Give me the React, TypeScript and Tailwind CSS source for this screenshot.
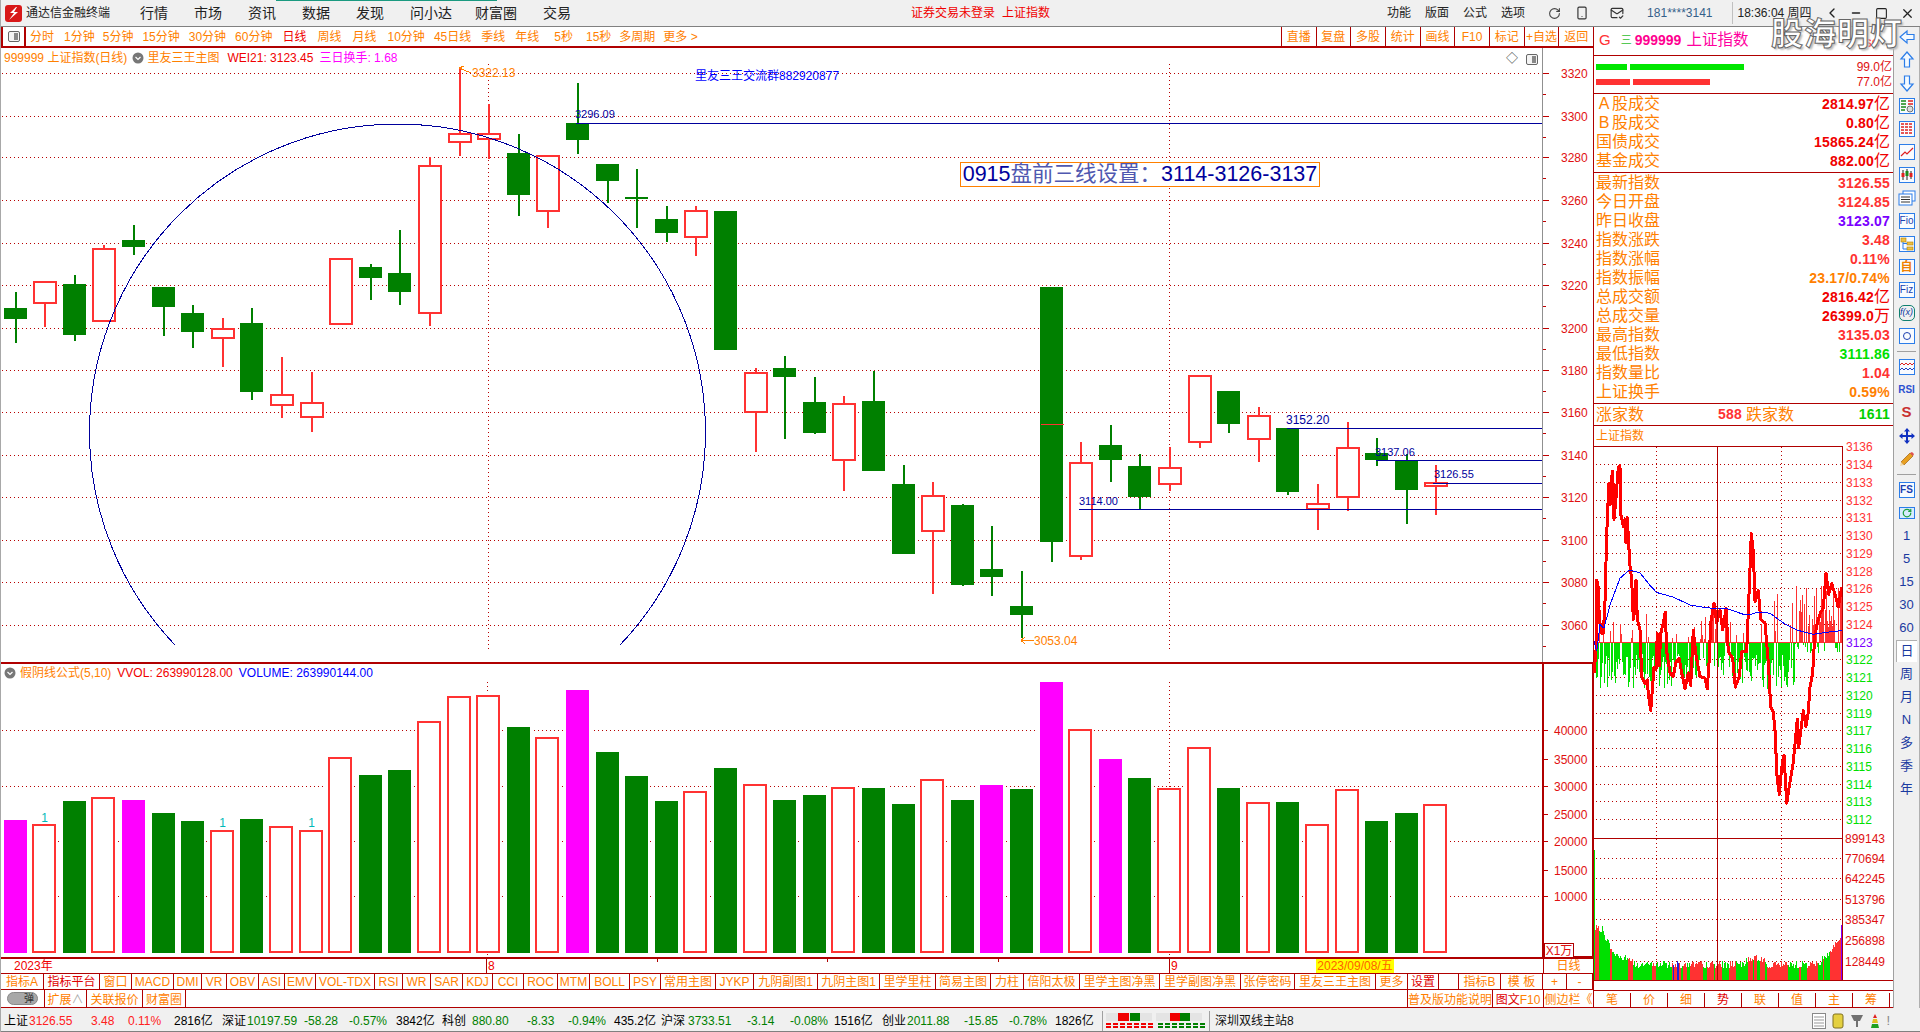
import React from 'react';
import { ChevronLeft, Minus, Square, X, Smartphone, MailCheck, RotateCw } from 'lucide-react';

const RED = '#ff3232';
const GREEN = '#008000';
const GRID = '#b80000';
const NAVY = '#00009c';

// [high, low, bodyTop, bodyBottom, rising]
const candles: [number, number, number, number, boolean][] = [
  [606, 740, 648, 677, false], [580, 698, 580, 636, true], [562, 734, 585, 718, false], [484, 684, 495, 683, true],
  [430, 510, 470, 489, false], [593, 720, 593, 645, false], [640, 752, 661, 711, false], [674, 802, 702, 727, true],
  [648, 888, 687, 867, false], [776, 935, 875, 902, true], [815, 971, 896, 934, true], [521, 691, 521, 691, true],
  [533, 627, 541, 570, false], [444, 640, 557, 606, false], [254, 695, 276, 662, true], [20, 250, 193, 215, true],
  [115, 258, 193, 207, true], [193, 408, 243, 354, false], [250, 438, 250, 395, true], [60, 245, 165, 209, false],
  [272, 373, 272, 316, false], [285, 438, 358, 362, false], [382, 475, 416, 451, false], [382, 512, 394, 463, true],
  [395, 757, 395, 757, false], [806, 1023, 817, 920, true], [774, 990, 805, 828, false], [828, 978, 894, 975, false],
  [879, 1125, 898, 1046, true], [813, 1073, 891, 1073, false], [1058, 1290, 1108, 1290, false], [1103, 1395, 1139, 1231, true],
  [1160, 1375, 1163, 1371, false], [1218, 1400, 1330, 1350, false], [1335, 1510, 1427, 1449, false], [593, 1312, 593, 1259, false],
  [998, 1306, 1052, 1297, true], [954, 1102, 1006, 1044, false], [1030, 1175, 1061, 1141, false], [1010, 1125, 1067, 1109, true],
  [825, 1013, 825, 999, true], [865, 975, 865, 950, false], [907, 1050, 930, 991, true], [962, 1136, 962, 1128, false],
  [1108, 1228, 1159, 1173, true], [946, 1178, 1013, 1142, true], [988, 1060, 1027, 1044, false], [1030, 1212, 1044, 1123, false],
  [1058, 1188, 1105, 1114, true],
];

const barTops: [number, string][] = [
  [480, 'M'], [494, 'R'], [423, 'G'], [413, 'R'], [420, 'M'], [459, 'G'], [483, 'G'], [512, 'R'], [477, 'G'], [500, 'R'],
  [512, 'R'], [293, 'R'], [345, 'G'], [330, 'G'], [187, 'R'], [110, 'R'], [107, 'R'], [201, 'G'], [233, 'R'], [90, 'M'],
  [276, 'G'], [348, 'G'], [423, 'G'], [395, 'R'], [324, 'G'], [374, 'R'], [420, 'G'], [405, 'G'], [383, 'R'], [384, 'G'],
  [432, 'G'], [359, 'R'], [420, 'G'], [375, 'M'], [387, 'G'], [66, 'M'], [209, 'R'], [297, 'M'], [354, 'G'], [386, 'R'],
  [263, 'R'], [384, 'G'], [428, 'R'], [426, 'G'], [494, 'R'], [389, 'R'], [483, 'G'], [459, 'G'], [434, 'R'],
];

const cx = (i: number) => Math.round(14.5 + 29.6 * i) + 0.5;
const cy = (v: number) => Math.round(60 + v / 2.613);

const priceGrid = [73, 116, 157, 200, 243, 285, 328, 370, 412, 455, 497, 540, 582, 625];
const priceLabels = [3320, 3300, 3280, 3260, 3240, 3220, 3200, 3180, 3160, 3140, 3120, 3100, 3080, 3060];
const volLabels: [string, number][] = [
  ['40000', 730], ['35000', 759], ['30000', 786], ['25000', 814], ['20000', 841], ['15000', 870], ['10000', 896],
];

function PriceChart() {
  return (
    <svg width={1592} height={614} viewBox="1 48 1592 614" shapeRendering="crispEdges" className="block">
      {priceGrid.map((y) => (
        <line key={y} x1={2} x2={1542} y1={y + 0.5} y2={y + 0.5} stroke={GRID} strokeDasharray="1 3" />
      ))}
      {[488, 1169].map((x) => (
        <line key={x} x1={x + 0.5} x2={x + 0.5} y1={64} y2={650} stroke={GRID} strokeDasharray="1 3" />
      ))}
      <line x1={1542.5} x2={1542.5} y1={48} y2={662} stroke="#909090" />
      {priceGrid.map((y, i) => (
        <g key={y}>
          <line x1={1543} x2={1549} y1={y + 0.5} y2={y + 0.5} stroke="#c00000" />
          <line x1={1543} x2={1546} y1={y + 21.5} y2={y + 21.5} stroke="#c00000" />
          <text x={1561} y={y + 5} fontSize={12} fill="#e01010">{priceLabels[i]}</text>
        </g>
      ))}
      {candles.map(([hi, lo, top, bot, up], i) => {
        const x = cx(i);
        const color = up ? RED : GREEN;
        return (
          <g key={i}>
            <line x1={x} x2={x} y1={cy(hi)} y2={cy(lo)} stroke={color} strokeWidth={2} />
            {up ? (
              <rect x={x - 11} y={cy(top)} width={22} height={cy(bot) - cy(top)} fill="#fff" stroke={RED} strokeWidth={2} />
            ) : (
              <rect x={x - 11.5} y={cy(top)} width={23} height={Math.max(cy(bot) - cy(top), 2)} fill={GREEN} />
            )}
          </g>
        );
      })}
      <line x1={cx(35) - 11} x2={cx(35) + 12} y1={424.5} y2={424.5} stroke={RED} />
      <path d="M175 645 A308 308 0 1 1 620 645" fill="none" stroke={NAVY} />
      <line x1={576} x2={1542} y1={123.5} y2={123.5} stroke={NAVY} />
      <line x1={1287} x2={1542} y1={428.5} y2={428.5} stroke={NAVY} />
      <line x1={1376} x2={1542} y1={460.5} y2={460.5} stroke={NAVY} />
      <line x1={1433} x2={1542} y1={483.5} y2={483.5} stroke={NAVY} />
      <line x1={1079} x2={1542} y1={509.5} y2={509.5} stroke={NAVY} />
      <text x={575} y={118} fontSize={11} fill={NAVY}>3296.09</text>
      <text x={1286} y={424} fontSize={12} fill={NAVY}>3152.20</text>
      <text x={1375} y={456} fontSize={11} fill={NAVY}>3137.06</text>
      <text x={1434} y={478} fontSize={11} fill={NAVY}>3126.55</text>
      <text x={1079} y={505} fontSize={11} fill={NAVY}>3114.00</text>
      <path d="M459 68 L464 66 M459 68 L471 73" stroke="#ff8000" fill="none" />
      <text x={472} y={77} fontSize={12} fill="#ff8000">3322.13</text>
      <path d="M1021 640.5 H1034 M1021 640.5 L1025 637 M1021 640.5 L1025 644" stroke="#ff8000" fill="none" />
      <text x={1034} y={645} fontSize={12} fill="#ff8000">3053.04</text>
    </svg>
  );
}

function VolumeChart() {
  return (
    <svg width={1592} height={293} viewBox="1 664 1592 293" shapeRendering="crispEdges" className="block">
      {[730, 786, 841, 896].map((y) => (
        <line key={y} x1={2} x2={1542} y1={y + 0.5} y2={y + 0.5} stroke={GRID} strokeDasharray="1 3" />
      ))}
      {[487, 1169].map((x) => (
        <line key={x} x1={x + 0.5} x2={x + 0.5} y1={682} y2={957} stroke={GRID} strokeDasharray="1 3" />
      ))}
      {barTops.map(([top, kind], i) => {
        const x = Math.round(14.5 + 29.6 * i);
        const y = Math.round(660 + top / 3);
        const fill = kind === 'M' ? '#ff00ff' : GREEN;
        return (
          <g key={i}>
            <rect x={x - 14} y={y - 2} width={28} height={955 - y} fill="#fff" />
            {kind === 'R' ? (
              <rect x={x - 11} y={y} width={22} height={952 - y} fill="#fff" stroke={RED} strokeWidth={2} />
            ) : (
              <rect x={x - 11.5} y={y} width={23} height={953 - y} fill={fill} />
            )}
          </g>
        );
      })}
      {[1, 7, 10].map((i, n) => (
        <text key={i} x={cx(i)} y={[822, 827, 827][n]} fontSize={12} textAnchor="middle" fill="#00b8b8">1</text>
      ))}
      <rect x={1543} y={663} width={50} height={294} fill="#fff" stroke="#b00000" strokeWidth={2} />
      {volLabels.map(([t, y]) => (
        <g key={t}>
          <line x1={1544} x2={1548} y1={y + 0.5} y2={y + 0.5} stroke="#c00000" />
          <text x={1554} y={y + 5} fontSize={12} fill="#e01010">{t}</text>
        </g>
      ))}
    </svg>
  );
}

const linePts = '12,680 18,620 20,420 25,440 28,530 35,570 40,570 45,480 48,370 50,290 53,230 56,150 60,210 65,130 68,115 72,250 78,190 85,105 90,100 92,235 100,270 105,250 108,315 112,245 116,320 120,380 125,420 130,530 135,500 138,420 142,530 150,560 155,690 165,710 172,700 175,740 182,785 186,740 192,665 198,670 202,570 208,660 212,570 220,540 226,510 230,620 240,680 250,690 258,650 268,640 275,680 285,725 295,680 302,715 310,560 318,630 330,690 345,695 352,725 358,640 362,540 372,485 380,540 390,505 398,560 408,500 415,620 428,640 436,720 448,690 455,620 470,620 478,440 484,290 490,340 495,480 505,450 512,530 525,540 535,650 542,775 550,790 556,850 560,960 568,1020 575,945 582,910 590,1045 600,985 610,930 622,810 626,890 640,785 648,830 655,790 660,720 668,680 674,580 682,540 692,510 700,500 708,400 716,460 725,430 735,460 745,495 755,440';
const avgPts = '12,590 20,620 30,545 42,555 60,490 90,415 118,392 150,400 180,435 200,455 250,468 300,490 350,498 410,500 460,516 485,516 500,510 540,513 580,540 620,560 670,572 720,565 755,562';

const toPage = (pts: string) =>
  pts.split(' ').map((p) => {
    const [x, y] = p.split(',').map(Number);
    return `${(1590 + x / 3).toFixed(1)},${(430 + y / 2.8).toFixed(1)}`;
  }).join(' ');

function seeded(seed: number) {
  let s = seed;
  return () => {
    s = (s * 1103515245 + 12345) & 0x7fffffff;
    return s / 0x7fffffff;
  };
}

function histogram() {
  const rnd = seeded(42);
  const out: { x: number; h: number; up: boolean }[] = [];
  for (let i = 0; i < 248; i++) {
    const z = i * 3;
    const pRed = z < 350 ? 0.2 : z < 480 ? 0.45 : z < 600 ? 0.12 : 0.72;
    const up = rnd() < pRed;
    const peak = up ? (z < 100 ? 30 : z < 350 ? 26 : z < 500 ? 36 : 46) : z < 350 ? 34 : z < 500 ? 30 : z < 600 ? 36 : 10;
    const floor = up ? (z >= 600 ? 12 : 3) : z >= 600 ? 2 : 12;
    out.push({ x: 1595 + i, h: Math.round(floor + peak * rnd()), up });
  }
  return out;
}

function miniVolumes() {
  const rnd = seeded(7);
  const out: { x: number; h: number; color: string }[] = [];
  let red = true;
  for (let i = 0; i < 248; i++) {
    if (rnd() < 0.3) red = rnd() < 0.45;
    const base = i < 8 ? 48 : i < 20 ? 44 - (i - 8) * 2 : i < 40 ? 22 - (i - 20) * 0.4 : i > 225 ? 16 + (i - 225) : i > 150 && i < 170 ? 18 : 12;
    const color = i > 75 && i < 84 && rnd() < 0.3 ? '#2020e0' : red ? RED : '#00e000';
    out.push({ x: 1595 + i, h: Math.round(base + rnd() * 7), color });
  }
  return out;
}

const miniLabels = [3136, 3134, 3133, 3132, 3131, 3130, 3129, 3128, 3126, 3125, 3124, 3123, 3122, 3121, 3120, 3119, 3117, 3116, 3115, 3114, 3113, 3112];
const miniVolLabels: [string, number][] = [
  ['899143', 838], ['770694', 858], ['642245', 878], ['513796', 899], ['385347', 919], ['256898', 940], ['128449', 961],
];

function MiniChart() {
  const axisY = 642;
  return (
    <svg width={299} height={535} viewBox="1594 446 299 535" shapeRendering="crispEdges" className="block overflow-visible">
      {miniLabels.map((_, i) => (
        <line key={i} x1={1596} x2={1842} y1={Math.round(446.4 + i * 17.75) + 0.5} y2={Math.round(446.4 + i * 17.75) + 0.5} stroke={GRID} strokeDasharray="1 3" />
      ))}
      {miniVolLabels.map(([t, y]) => (
        <line key={t} x1={1596} x2={1842} y1={y + 0.5} y2={y + 0.5} stroke={GRID} strokeDasharray="1 3" />
      ))}
      {[1656, 1781].map((x) => (
        <line key={x} x1={x + 0.5} x2={x + 0.5} y1={447} y2={980} stroke={GRID} strokeDasharray="1 3" />
      ))}
      {histogram().map((b) => (
        <line key={b.x} x1={b.x + 0.5} x2={b.x + 0.5} y1={b.up ? axisY - b.h : axisY} y2={b.up ? axisY : axisY + b.h} stroke={b.up ? RED : '#00e000'} />
      ))}
      <line x1={1594} x2={1842} y1={642.5} y2={642.5} stroke={RED} />
      <polyline points={toPage(linePts)} fill="none" stroke="#ff0000" strokeWidth={3} strokeLinejoin="round" />
      <polyline points={toPage(avgPts)} fill="none" stroke="#0000ff" />
      {miniVolumes().map((b) => (
        <line key={b.x} x1={b.x + 0.5} x2={b.x + 0.5} y1={980 - b.h} y2={980} stroke={b.color} />
      ))}
      <rect x={1594} y={850} width={1} height={130} fill="#00e000" />
      <rect x={1841} y={925} width={2} height={55} fill="#8000ff" />
      <line x1={1594} x2={1842} y1={446.5} y2={446.5} stroke="#b00000" />
      <line x1={1842.5} x2={1842.5} y1={446} y2={980} stroke="#b00000" />
      <line x1={1717.5} x2={1717.5} y1={446} y2={980} stroke="#b00000" />
      <line x1={1594} x2={1842} y1={838.5} y2={838.5} stroke="#b00000" />
      <line x1={1594} x2={1893} y1={980.5} y2={980.5} stroke="#b00000" />
      {miniLabels.map((v, i) => (
        <text key={v} x={1846} y={Math.round(446.4 + i * 17.75) + 5} fontSize={12} fill={v === 3123 ? '#7a00ff' : v > 3123 ? RED : '#00e000'}>{v}</text>
      ))}
      {miniVolLabels.map(([t, y]) => (
        <text key={t} x={1845} y={y + 5} fontSize={12} fill="#e01010">{t}</text>
      ))}
    </svg>
  );
}

const periods: [string, string, number][] = [
  ['分时', '#ff8000', 10], ['1分钟', '#ff8000', 8], ['5分钟', '#ff8000', 9], ['15分钟', '#ff8000', 9], ['30分钟', '#ff8000', 9],
  ['60分钟', '#ff8000', 10], ['日线', '#f00000', 11], ['周线', '#ff8000', 11], ['月线', '#ff8000', 11], ['10分钟', '#ff8000', 9],
  ['45日线', '#ff8000', 10], ['季线', '#ff8000', 10], ['年线', '#ff8000', 15], ['5秒', '#ff8000', 13], ['15秒', '#ff8000', 8],
  ['多周期', '#ff8000', 8], ['更多 >', '#ff8000', 0],
];
const toolButtons = ['直播', '复盘', '多股', '统计', '画线', 'F10', '标记', '+自选', '返回'];

// [label, right edge]
const tabs: [string, number][] = [
  ['指标A', 44], ['指标平台', 100], ['窗口', 132], ['MACD', 174], ['DMI', 202], ['VR', 227], ['OBV', 259], ['ASI', 285],
  ['EMV', 316], ['VOL-TDX', 375], ['RSI', 403], ['WR', 431], ['SAR', 463], ['KDJ', 493], ['CCI', 524], ['ROC', 558],
  ['MTM', 590], ['BOLL', 630], ['PSY', 661], ['常用主图', 716], ['JYKP', 754], ['九阴副图1', 818], ['九阴主图1', 880],
  ['里学里柱', 936], ['简易主图', 991], ['力柱', 1024], ['倍阳太极', 1080], ['里学主图净黑', 1160], ['里学副图净黑', 1241],
  ['张停密码', 1295], ['里友三王主图', 1376], ['更多', 1408], ['设置', 1439], ['', 1459], ['指标B', 1501], ['模 板', 1543],
  ['+', 1567], ['-', 1593],
];

// [text, colour, left edge]
const quotes: [string, string, number][] = [
  ['上证', '#000', 4], ['3126.55', '#ff2020', 29], ['3.48', '#ff2020', 91], ['0.11%', '#ff2020', 128], ['2816亿', '#000', 174],
  ['深证', '#000', 222], ['10197.59', GREEN, 247], ['-58.28', GREEN, 304], ['-0.57%', GREEN, 349], ['3842亿', '#000', 396],
  ['科创', '#000', 442], ['880.80', GREEN, 472], ['-8.33', GREEN, 527], ['-0.94%', GREEN, 568], ['435.2亿', '#000', 614],
  ['沪深', '#000', 661], ['3733.51', GREEN, 688], ['-3.14', GREEN, 747], ['-0.08%', GREEN, 790], ['1516亿', '#000', 834],
  ['创业', '#000', 882], ['2011.88', GREEN, 907], ['-15.85', GREEN, 964], ['-0.78%', GREEN, 1009], ['1826亿', '#000', 1055],
];

const group1 = [
  ['A股成交', '2814.97', '亿', '#f00000'], ['B股成交', '0.80', '亿', '#f00000'], ['国债成交', '15865.24', '亿', '#f00000'], ['基金成交', '882.00', '亿', '#f00000'],
];
const group2 = [
  ['最新指数', '3126.55', '', RED], ['今日开盘', '3124.85', '', RED], ['昨日收盘', '3123.07', '', '#7a00ff'], ['指数涨跌', '3.48', '', RED],
  ['指数涨幅', '0.11%', '', RED], ['指数振幅', '23.17/0.74%', '', '#ff8000'], ['总成交额', '2816.42', '亿', '#f00000'], ['总成交量', '26399.0', '万', '#f00000'],
  ['最高指数', '3135.03', '', RED], ['最低指数', '3111.86', '', '#00e000'], ['指数量比', '1.04', '', RED], ['上证换手', '0.59%', '', '#ff8000'],
];

function InfoRow({ row }: { row: string[] }) {
  const [label, value, unit, color] = row;
  const spaced = label[0] === 'A' || label[0] === 'B';
  return (
    <div className="flex h-[19px] items-center justify-between pl-[2px] pr-[3px] pt-px text-[16px] text-[#ff8000]">
      <span className="whitespace-nowrap">
        {spaced ? <span className="inline-block w-4 text-center">{label[0]}</span> : null}
        {spaced ? label.slice(1) : label}
      </span>
      <span className="whitespace-nowrap" style={{ color }}>
        <b className="text-[14px] tracking-[0.2px]">{value}</b>
        {unit}
      </span>
    </div>
  );
}

function ChevronDot() {
  return (
    <svg width={12} height={12} viewBox="0 0 12 12" className="shrink-0">
      <circle cx={6} cy={6} r={5.5} fill="#777" />
      <path d="M3.5 5 L6 7.5 L8.5 5" fill="none" stroke="#fff" strokeWidth={1.2} />
    </svg>
  );
}

function PanelToggle() {
  return (
    <svg width={12} height={11} viewBox="0 0 12 11" className="shrink-0">
      <rect x={0.5} y={0.5} width={11} height={10} rx={1.5} fill="#f4f4f4" stroke="#666" />
      <rect x={6} y={2} width={4} height={7} fill="#888" />
    </svg>
  );
}

function Arrow({ d }: { d: string }) {
  return (
    <svg width={20} height={20} viewBox="0 0 20 20">
      <path d={d} fill="#f4faff" stroke="#2b7de9" strokeWidth={1.2} />
    </svg>
  );
}

function IconBox({ children }: { children?: React.ReactNode }) {
  return (
    <div className="flex h-[16px] w-[16px] items-center justify-center overflow-hidden border border-[#2b7de9] bg-[#f8fbff] text-[10px] leading-none text-[#1b3fb0]">
      {children}
    </div>
  );
}

const stripText = 'text-[13px] text-[#1b3aa0]';

function SideStrip() {
  const Cell = ({ children }: { children?: React.ReactNode }) => (
    <div className="flex h-[23px] items-center justify-center">{children}</div>
  );
  const Sep = () => (
    <div className="flex h-[8px] items-center px-[3px]"><div className="h-px w-full bg-[#a0a0a0]" /></div>
  );
  return (
    <div className="flex w-[25px] flex-col">
      <Cell><Arrow d="M3 10 L10 4 V7.5 H17 V12.5 H10 V16 Z" /></Cell>
      <Cell><Arrow d="M10 2 L16 9 H12.5 V17 H7.5 V9 H4 Z" /></Cell>
      <Cell><Arrow d="M10 18 L16 11 H12.5 V3 H7.5 V11 H4 Z" /></Cell>
      <Cell>
        <IconBox>
          <svg width={14} height={14} viewBox="0 0 14 14"><path d="M1 2h5M1 5h5M1 8h5M1 11h4" stroke="#1a8a1a" strokeWidth={1.4} /><path d="M8 2h5M8 5h5" stroke="#e02020" strokeWidth={1.4} /><circle cx={10} cy={10} r={3} fill="#ddd" stroke="#555" strokeWidth={0.8} /></svg>
        </IconBox>
      </Cell>
      <Cell>
        <IconBox>
          <svg width={14} height={14} viewBox="0 0 14 14"><path d="M1 2h12M1 5h12M1 8h12M1 11h12" stroke="#e02020" strokeWidth={1.5} strokeDasharray="3 1" /></svg>
        </IconBox>
      </Cell>
      <Cell>
        <IconBox>
          <svg width={14} height={14} viewBox="0 0 14 14"><path d="M1 11 L5 7 L7 9 L13 3" fill="none" stroke="#e02020" strokeWidth={1.2} /></svg>
        </IconBox>
      </Cell>
      <Cell>
        <IconBox>
          <svg width={14} height={14} viewBox="0 0 14 14"><path d="M3 2v10M7 1v11M11 3v8" stroke="#222" /><rect x={1.5} y={5} width={3} height={4} fill="#e02020" /><rect x={5.5} y={3} width={3} height={5} fill="#1a8a1a" /><rect x={9.5} y={5} width={3} height={4} fill="#e02020" /></svg>
        </IconBox>
      </Cell>
      <Cell>
        <svg width={18} height={16} viewBox="0 0 18 16"><rect x={5} y={1} width={12} height={10} fill="#fff" stroke="#2b7de9" /><rect x={1} y={4} width={13} height={11} fill="#fff" stroke="#2b7de9" /><path d="M3 7h9M3 9.5h9M3 12h9" stroke="#333" /></svg>
      </Cell>
      <Cell><IconBox>Fio</IconBox></Cell>
      <Cell>
        <IconBox>
          <svg width={14} height={14} viewBox="0 0 14 14"><rect x={1} y={1} width={5} height={4} fill="#f0c040" stroke="#b08000" strokeWidth={0.6} /><rect x={7} y={5} width={6} height={3} fill="#f0c040" stroke="#b08000" strokeWidth={0.6} /><rect x={7} y={10} width={6} height={3} fill="#f0c040" stroke="#b08000" strokeWidth={0.6} /><path d="M3 5v7h4M3 6.5h4" fill="none" stroke="#2b7de9" /></svg>
        </IconBox>
      </Cell>
      <Cell><IconBox><span className="text-[12px] font-bold text-[#f08000]">自</span></IconBox></Cell>
      <Cell><IconBox>Fiz</IconBox></Cell>
      <Cell>
        <div className="flex h-[16px] w-[16px] items-center justify-center rounded-[5px] border border-[#108070] text-[9px] italic text-[#0a3aa0]">f(x)</div>
      </Cell>
      <Cell>
        <IconBox><span className="h-[8px] w-[8px] rounded-full border border-[#1b3fb0]" /></IconBox>
      </Cell>
      <Sep />
      <Cell>
        <IconBox>
          <svg width={14} height={10} viewBox="0 0 14 10"><path d="M0 3 L2 1 L4 3 L6 1 L8 3 L10 1 L12 3 L14 1" fill="none" stroke="#e02020" /><path d="M0 8 L2 6 L4 8 L6 6 L8 8 L10 6 L12 8 L14 6" fill="none" stroke="#2040c0" /></svg>
        </IconBox>
      </Cell>
      <Cell><span className="text-[10px] font-bold text-[#2b50d0]">RSI</span></Cell>
      <Cell><span className="text-[15px] font-bold text-[#c83030]">S</span></Cell>
      <Cell>
        <svg width={16} height={16} viewBox="0 0 16 16" fill="#1030c0"><path d="M8 0 L11 3.5 H9 V7 H12.5 V5 L16 8 L12.5 11 V9 H9 V12.5 H11 L8 16 L5 12.5 H7 V9 H3.5 V11 L0 8 L3.5 5 V7 H7 V3.5 H5 Z" /></svg>
      </Cell>
      <Cell>
        <svg width={16} height={16} viewBox="0 0 16 16"><path d="M2 11 L11 2 L14 5 L5 14 Z" fill="#e8a020" stroke="#a06010" strokeWidth={0.7} /><path d="M2 11 L1 15 L5 14 Z" fill="#f4d8a0" /><path d="M11 2 L14 5 L15 3 L13 1 Z" fill="#e05050" /></svg>
      </Cell>
      <Sep />
      <Cell><IconBox><b>FS</b></IconBox></Cell>
      <Cell>
        <div className="flex h-[12px] w-[16px] items-center justify-center border border-[#2b7de9] bg-[#d8ecff]"><RotateCw size={10} color="#20a040" strokeWidth={3} /></div>
      </Cell>
      {['1', '5', '15', '30', '60'].map((t) => (
        <Cell key={t}><span className={stripText}>{t}</span></Cell>
      ))}
      <Cell><span className={`${stripText} flex h-[22px] w-[21px] items-center justify-center border-l border-t border-[#b0b0b0] bg-white`}>日</span></Cell>
      {['周', '月', 'N', '多', '季', '年'].map((t) => (
        <Cell key={t}><span className={stripText}>{t}</span></Cell>
      ))}
    </div>
  );
}

function TitleBar() {
  const menus = ['行情', '市场', '资讯', '数据', '发现', '问小达', '财富圈', '交易'];
  return (
    <div className="relative flex h-[27px] shrink-0 items-center border-b border-[#808080] bg-[#f0f0f0] text-[12px] text-[#222]">
      <div className="absolute left-[275px] top-0 h-px w-[221px] bg-[#1a9a80]" />
      <svg width={17} height={17} viewBox="0 0 17 17" className="ml-[4px]">
        <rect width={17} height={17} rx={3} fill="#d81818" />
        <path d="M11 2 L5 8 H9 L4 15 L13 7 H9 L12 2 Z" fill="#fff" />
      </svg>
      <span className="ml-[4px]">通达信金融终端</span>
      <div className="ml-[30px] flex gap-[26px] text-[14px]">
        {menus.map((m) => <span key={m} className={m === '问小达' ? '-mr-[3px]' : ''}>{m}</span>)}
      </div>
      <span className="ml-[340px] text-[#f00000]">证券交易未登录</span>
      <span className="ml-[7px] text-[#f00000]">上证指数</span>
      <div className="ml-[337px] flex gap-[14px]">
        {['功能', '版面', '公式', '选项'].map((m) => <span key={m}>{m}</span>)}
      </div>
      <RotateCw size={13} className="ml-[23px]" color="#444" />
      <Smartphone size={14} className="ml-[14px]" color="#333" />
      <MailCheck size={14} className="ml-[21px]" color="#333" />
      <span className="ml-[23px] text-[#35608a]">181****3141</span>
      <div className="ml-[19px] flex h-[22px] items-center whitespace-nowrap border-l border-[#c0c0c0] pl-[5px]">18:36:04 周四</div>
      <ChevronLeft size={16} className="absolute left-[1823px]" color="#222" />
      <Minus size={12} className="absolute left-[1849px]" color="#222" strokeWidth={3} />
      <Square size={13} className="absolute left-[1874px]" color="#222" />
      <X size={15} className="absolute left-[1899px]" color="#222" />
    </div>
  );
}

function Toolbar() {
  return (
    <div className="flex h-[21px] shrink-0 items-center border-b-2 border-[#b00000] text-[12px]">
      <div className="flex h-full w-[25px] items-center justify-center border-x-2 border-[#b00000]"><PanelToggle /></div>
      <div className="ml-[4px] flex items-center whitespace-nowrap">
        {periods.map(([t, c, gap]) => (
          <span key={t} style={{ color: c, marginRight: gap }}>{t}</span>
        ))}
      </div>
      <div className="ml-auto flex h-full">
        {toolButtons.map((t) => (
          <div key={t} className="flex w-[34.7px] items-center justify-center whitespace-nowrap border-l border-[#b00000] text-[#ff8000]">{t}</div>
        ))}
      </div>
    </div>
  );
}

function PricePane() {
  return (
    <div className="relative h-[614px] shrink-0">
      <PriceChart />
      <div className="absolute left-[3px] top-[1px] flex h-[17px] items-center whitespace-nowrap text-[12px]">
        <span className="text-[#ff8000]">999999 上证指数(日线)</span>
        <span className="ml-[5px]"><ChevronDot /></span>
        <span className="ml-[3px] text-[#ff8000]">里友三王主图</span>
        <span className="ml-[8px] text-[#f00000]">WEI21: 3123.45</span>
        <span className="ml-[6px] text-[#ff00ff]">三日换手: 1.68</span>
      </div>
      <div className="absolute left-[1505px] top-[2px] flex items-center gap-[8px] text-[12px] text-[#444]">
        <span>◇</span>
        <PanelToggle />
      </div>
      <div className="absolute left-[694px] top-[19px] whitespace-nowrap text-[12px] text-[#0000ff]">里友三王交流群882920877</div>
      <div className="absolute left-[959px] top-[114px] flex h-[25px] w-[360px] items-center justify-center whitespace-nowrap border border-[#ff8000] bg-white text-[21.5px] text-[#00009c]">
        0915<span className="text-[#5058b0]">盘前三线设置：</span>3114-3126-3137
      </div>
    </div>
  );
}

function VolumePane() {
  return (
    <div className="relative h-[295px] shrink-0 border-t-2 border-[#b00000]">
      <VolumeChart />
      <div className="absolute left-[3px] top-0 flex h-[17px] items-center gap-[6px] whitespace-nowrap text-[12px]">
        <ChevronDot />
        <span className="-ml-[2px] text-[#ff8000]">假阴线公式(5,10)</span>
        <span className="text-[#f00000]">VVOL: 263990128.00</span>
        <span className="text-[#0000ff]">VOLUME: 263990144.00</span>
      </div>
      <div className="absolute bottom-[-1px] left-[1543px] flex h-[15px] w-[30px] items-center justify-center border border-[#b00000] bg-white text-[12px] text-[#e01010]">X1万</div>
    </div>
  );
}

function DateRow() {
  return (
    <div className="relative flex h-[16px] shrink-0 items-center border-t-2 border-[#b00000] text-[12px] text-[#f00000]">
      <span className="ml-[13px] w-[472px]">2023年</span>
      <span className="h-full w-[683px] border-l border-[#b00000] pl-[1px] leading-[14px]">8</span>
      <span className="h-full w-[147px] border-l border-[#b00000] pl-[1px] leading-[14px]">9</span>
      <span className="flex h-full w-[78px] items-center justify-center whitespace-nowrap bg-[#ffff00] text-[#ff6000]">2023/09/08/五</span>
      <span className="ml-[149px] flex h-full w-[50px] items-center justify-center border-l border-[#b00000] text-[#ff8000]">日线</span>
      <div className="absolute left-[656px] top-0 h-[3px] w-px bg-[#b00000]" />
      <div className="absolute left-[826px] top-0 h-[3px] w-px bg-[#b00000]" />
      <div className="absolute left-[997px] top-0 h-[3px] w-px bg-[#b00000]" />
    </div>
  );
}

function TabRow() {
  return (
    <div className="flex h-[17px] shrink-0 border-y border-[#b00000] text-[12px] text-[#ff8000]">
      {tabs.map(([label, right], i) => {
        const left = i === 0 ? 1 : tabs[i - 1][1];
        const red = label === '指标平台' || label === '设置';
        return (
          <div
            key={label + i}
            className={`flex items-center justify-center whitespace-nowrap border-r border-[#b00000] ${red ? 'text-[#e00000]' : ''}`}
            style={{ width: right - left }}
          >
            {label}
          </div>
        );
      })}
    </div>
  );
}

function BottomRow() {
  return (
    <div className="flex h-[18px] shrink-0 items-stretch border-b border-[#b00000] text-[12px] text-[#ff8000]">
      <div className="flex w-[44px] items-center justify-center border-r border-[#b00000]">
        <div className="flex h-[13px] w-[31px] items-center justify-end rounded-full border border-[#888] bg-[#a8a8a8] pr-[3px] text-[10px] leading-none text-[#333]">弹</div>
      </div>
      <div className="flex w-[42px] items-center justify-center border-r border-[#b00000] pt-[2px]">扩展<span className="text-[#aaa]">∧</span></div>
      <div className="flex w-[56px] items-center justify-center border-r border-[#b00000] pt-[2px]">关联报价</div>
      <div className="flex w-[43px] items-center justify-center border-r border-[#b00000] pt-[2px]">财富圈</div>
      <div className="ml-auto flex w-[86px] items-center justify-center whitespace-nowrap border-x border-[#b00000] pt-[2px]">普及版功能说明</div>
      <div className="flex w-[51px] items-center justify-center whitespace-nowrap border-r border-[#b00000] pt-[2px]"><span className="text-[#e00000]">图文</span>F10</div>
      <div className="flex w-[49px] items-center justify-center whitespace-nowrap pt-[2px]">侧边栏《</div>
    </div>
  );
}

function RightPanel() {
  return (
    <div className="flex w-[300px] shrink-0 flex-col border-l border-[#b00000]">
      <div className="relative flex h-[29px] shrink-0 items-center whitespace-nowrap border-b border-[#b00000] pb-[2px] pl-[5px]">
        <span className="text-[15px] text-[#ff3232]">G</span>
        <span className="ml-[10px] text-[11px] text-[#30c030]">三</span>
        <b className="ml-[3px] text-[14px] text-[#ff0090]">999999</b>
        <span className="ml-[5px] text-[15.5px] text-[#ff00a0]">上证指数</span>
        <span className="absolute left-[271px] top-[9px] text-[10px] font-bold text-[#ff4040]">SG</span>
      </div>
      <div className="h-[38px] shrink-0 border-b border-[#b00000] pt-[3px] text-[12px] text-[#e01010]">
        <div className="flex h-[15px] items-center pl-[2px] pr-[1px]">
          <div className="h-[6px] w-[31px] bg-[#00e600]" />
          <div className="ml-[3px] h-[6px] w-[114px] bg-[#00e600]" />
          <span className="ml-auto">99.0亿</span>
        </div>
        <div className="flex h-[15px] items-center pl-[2px] pr-[1px]">
          <div className="h-[6px] w-[34px] bg-[#ff3232]" />
          <div className="ml-[3px] h-[6px] w-[77px] bg-[#ff3232]" />
          <span className="ml-auto">77.0亿</span>
        </div>
      </div>
      <div className="h-[79px] shrink-0 border-b border-[#b00000]">
        {group1.map((r) => <InfoRow key={r[0]} row={r} />)}
      </div>
      <div className="h-[231px] shrink-0 border-b border-[#b00000]">
        {group2.map((r) => <InfoRow key={r[0]} row={r} />)}
      </div>
      <div className="flex h-[22px] shrink-0 items-center border-b border-[#b00000] pl-[2px] pr-[3px] text-[16px] text-[#ff8000]">
        <span className="w-[122px]">涨家数</span>
        <b className="w-[28px] text-[14px] tracking-[0.2px] text-[#ff3232]">588</b>
        <span>跌家数</span>
        <b className="ml-auto text-[14px] tracking-[0.2px] text-[#00d000]">1611</b>
      </div>
      <div className="flex h-[20px] shrink-0 items-center pl-[2px] text-[12px] text-[#ff8000]">上证指数</div>
      <MiniChart />
      <div className="h-[9px] shrink-0" />
      <div className="flex h-[18px] shrink-0 border-y border-[#b00000] pt-[2px] text-[12px] text-[#ff8000]">
        {['笔', '价', '细', '势', '联', '值', '主', '筹'].map((t) => (
          <div key={t} className={`flex w-[37px] items-center justify-center border-r border-[#b00000] ${t === '势' ? 'text-[#e00000]' : ''}`}>{t}</div>
        ))}
      </div>
    </div>
  );
}

function StatusBar() {
  return (
    <div className="flex h-[24px] shrink-0 items-center border-b border-[#808080] bg-[#f0f0f0] pt-[2px] text-[12px]">
      {quotes.map(([t, c, left], i) => {
        const next = i + 1 < quotes.length ? quotes[i + 1][2] : 1102;
        return (
          <span key={t + i} className="whitespace-nowrap" style={{ color: c, width: next - left, marginLeft: i === 0 ? 3 : 0 }}>{t}</span>
        );
      })}
      <div className="flex h-[20px] w-[108px] items-center justify-center border-x border-[#a0a0a0]">
        <svg width={100} height={16} viewBox="0 0 100 16" shapeRendering="crispEdges">
          <rect x={0} y={0} width={46} height={8} fill="#e4e4e4" />
          <rect x={12} y={0} width={11} height={8} fill="#f00000" />
          <rect x={24} y={0} width={10} height={8} fill="#008000" />
          <rect x={50} y={0} width={46} height={8} fill="#e4e4e4" />
          <rect x={64} y={0} width={10} height={8} fill="#f00000" />
          <rect x={74} y={0} width={10} height={8} fill="#008000" />
          {[0, 7, 14, 21, 28, 35, 42].map((x) => (
            <g key={x}>
              <rect x={x} y={10} width={5} height={2} fill="#f00000" />
              <rect x={x} y={13} width={5} height={2} fill="#f00000" />
              <rect x={x + 52} y={10} width={5} height={2} fill="#008000" />
              <rect x={x + 52} y={13} width={5} height={2} fill="#008000" />
            </g>
          ))}
        </svg>
      </div>
      <span className="ml-[5px] text-[#111]">深圳双线主站8</span>
      <div className="ml-auto flex items-center gap-[6px] pr-[30px]">
        <svg width={14} height={16} viewBox="0 0 14 16"><rect x={0.5} y={0.5} width={13} height={15} fill="#fff" stroke="#888" /><path d="M2 4h10M2 7h10M2 10h10M2 13h10" stroke="#999" /></svg>
        <svg width={12} height={16} viewBox="0 0 12 16"><rect x={1} y={1} width={10} height={14} rx={2} fill="#e4d040" stroke="#807020" /></svg>
        <svg width={14} height={16} viewBox="0 0 14 16"><path d="M1 2h12l-3 6h-2v6h-2v-6h-2z" fill="#707070" /></svg>
        <svg width={10} height={16} viewBox="0 0 10 16"><path d="M5 1l2 4h-4z" fill="#e02020" /><path d="M3 6h4l1 4h-6z" fill="#e0c020" /><path d="M2 11h6l1 4h-8z" fill="#20a020" /></svg>
        <span className="text-[13px] text-[#888]">!</span>
      </div>
    </div>
  );
}

export default function App() {
  return (
    <div className="relative flex h-[1032px] w-[1920px] flex-col overflow-hidden border-l border-[#a8a8a8] bg-white [font-family:'Liberation_Sans','Noto_Sans_CJK_SC',sans-serif]">
      <TitleBar />
      <div className="flex h-[981px] shrink-0">
        <div className="flex w-[1592px] shrink-0 flex-col">
          <Toolbar />
          <PricePane />
          <VolumePane />
          <DateRow />
          <TabRow />
          <BottomRow />
        </div>
        <RightPanel />
        <div className="-mt-[2px] flex w-[27px] shrink-0 border-l border-[#a0a0a0] bg-[#f0f0f0]">
          <SideStrip />
          <div className="w-px bg-[#b0b0b0]" />
        </div>
      </div>
      <StatusBar />
      <div className="absolute left-[1770px] top-[12px] whitespace-nowrap text-[32px] font-bold leading-[44px] tracking-[1px] text-white [-webkit-text-stroke:1px_#666] [text-shadow:2px_2px_2px_#bbb]">
        股海明灯
      </div>
    </div>
  );
}
